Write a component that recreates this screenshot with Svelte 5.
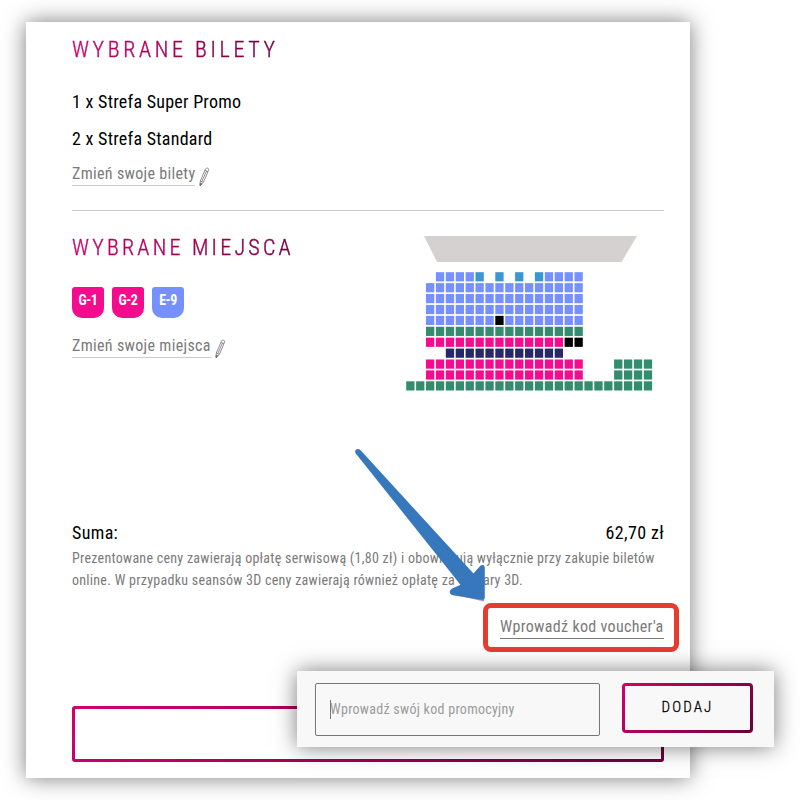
<script lang="ts">
	type Run = [row: number, from: number, to: number, kind: string];

	const tickets = [
		{ count: 1, name: 'Strefa Super Promo' },
		{ count: 2, name: 'Strefa Standard' }
	];

	const chosen = [
		{ label: 'G-1', kind: 'pink' },
		{ label: 'G-2', kind: 'pink' },
		{ label: 'E-9', kind: 'blue' }
	];

	// runs of neighbouring seats: row, first column, last column, zone
	const runs: Run[] = [
		[0, 3, 6, 'blue'],
		[0, 7, 7, 'sky'],
		[0, 9, 9, 'sky'],
		[0, 11, 11, 'sky'],
		[0, 13, 13, 'sky'],
		[0, 14, 17, 'blue'],
		[1, 2, 17, 'blue'],
		[2, 2, 17, 'blue'],
		[3, 2, 17, 'blue'],
		[4, 2, 8, 'blue'],
		[4, 9, 9, 'taken'],
		[4, 10, 17, 'blue'],
		[5, 2, 17, 'green'],
		[6, 2, 15, 'pink'],
		[6, 16, 17, 'taken'],
		[7, 4, 15, 'navy'],
		[8, 2, 17, 'pink'],
		[8, 21, 24, 'green'],
		[9, 2, 17, 'pink'],
		[9, 21, 24, 'green'],
		[10, 0, 24, 'green']
	];

	const seats = runs.flatMap(([row, from, to, kind]) =>
		Array.from({ length: to - from + 1 }, (_, i) => ({
			x: 0.2 + (from + i) * 9.9,
			y: 36.2 + row * 10.91,
			kind
		}))
	);

	let code = $state('');
</script>

{#snippet pencil()}
	<svg class="pencil" width="11" height="20" viewBox="0 0 11 20">
		<path d="M1 18.6 1.3 14 6.4 2.2Q7.3.5 8.8 1.2T9.5 3.4L4.4 15.3ZM1.3 14 4.4 15.3M5.9 3.3 9 4.7M2.8 14.5 7.5 4" />
		<path class="tip" d="m1 18.8.2-2.7 1.8.8Z" />
	</svg>
{/snippet}

<div class="page">
	<main class="card">
		<h2 class="title"><span>Wybrane bilety</span></h2>
		<ul class="tickets">
			{#each tickets as ticket}
				<li>{ticket.count} x {ticket.name}</li>
			{/each}
		</ul>
		<div class="edit"><a class="link" href="#bilety">Zmień swoje bilety</a>{@render pencil()}</div>

		<section class="seats">
			<div>
				<h2 class="title"><span class="tight">Wybrane miejsca</span></h2>
				<div class="badges">
					{#each chosen as seat}
						<span class="badge {seat.kind}">{seat.label}</span>
					{/each}
				</div>
				<div class="edit"><a class="link" href="#miejsca">Zmień swoje miejsca</a>{@render pencil()}</div>
			</div>
			<svg class="map" width="248" height="156" viewBox="0 0 248 156">
				<path class="screen" d="M18 0H231L215.5 26H31Z" />
				{#each seats as seat}
					<rect class={seat.kind} x={seat.x} y={seat.y} width="8.3" height="9.2" />
				{/each}
			</svg>
		</section>

		<div class="sum"><span>Suma:</span><span>62,70 zł</span></div>
		<p class="note">
			Prezentowane ceny zawierają opłatę serwisową (1,80 zł) i obowiązują wyłącznie przy zakupie biletów<br />
			online. W przypadku seansów 3D ceny zawierają również opłatę za okulary 3D.
		</p>
		<div class="voucher"><a class="link" href="#voucher">Wprowadź kod voucher'a</a></div>
		<div class="next frame"></div>
	</main>

	<svg class="arrow" width="140" height="160" viewBox="350 445 140 160">
		<path class="shade" d="M451 594 484 601.5 484.5 597 452 590Z" />
		<path d="M355.4 453C354.2 449.5 358 447.8 360.6 450.3L473.5 573.5 480.5 565.6Q484.6 563.5 484.8 568V597Q484.8 600.2 481.3 599.7L453 595.3C449 594.5 448.6 590.5 452.2 588.5L460.5 584.8Z" />
	</svg>

	<form class="promo">
		<div class="field">
			<input bind:value={code} placeholder="Wprowadź swój kod promocyjny" />
			<i class="caret"></i>
		</div>
		<button type="button" class="frame">Dodaj</button>
	</form>
</div>

<style>
	:global(body) {
		background: #fff;
	}

	.page {
		position: relative;
		box-sizing: border-box;
		width: 800px;
		height: 800px;
		padding: 22px 110px 22px 26px;
		overflow: hidden;
		font-family: 'Roboto Condensed', Roboto, sans-serif;
		font-stretch: 75%;
		color: #000;
	}

	.card {
		box-sizing: border-box;
		height: 756px;
		padding: 14px 26px 16px 46px;
		background: #fff;
		box-shadow: 0 0 21px rgba(0, 0, 0, 0.52);
		display: flex;
		flex-direction: column;
	}

	.title {
		height: 26px;
		margin: 0;
		font-size: 22px;
		font-weight: 300;
		line-height: 28px;
		text-transform: uppercase;
	}

	.title span {
		display: inline-block;
		white-space: nowrap;
		letter-spacing: 3.65px;
		background: linear-gradient(90deg, #d3006c, #74003f);
		background-clip: text;
		-webkit-background-clip: text;
		-webkit-text-stroke: 0.4px transparent;
		color: transparent;
	}

	.title .tight {
		letter-spacing: 3.25px;
	}

	.tickets {
		list-style: none;
		margin: 21px 0 5px;
		padding: 0;
	}

	.tickets li {
		height: 37px;
		font-size: 18px;
		line-height: 37px;
		letter-spacing: 0.25px;
	}

	.edit {
		display: flex;
		gap: 4px;
		height: 28px;
	}

	.link {
		box-sizing: border-box;
		height: 24px;
		border-bottom: 1px solid #ccc;
		font-size: 16px;
		line-height: 24px;
		letter-spacing: 0.32px;
		color: #7a7a7a;
		text-decoration: none;
		white-space: nowrap;
	}

	.pencil {
		margin-top: 5px;
		fill: none;
		stroke: #6c6c6c;
		stroke-width: 0.75;
	}

	.pencil .tip {
		fill: #6c6c6c;
	}

	.seats {
		display: flex;
		justify-content: space-between;
		height: 309px;
		margin-top: 20px;
		border-top: 1px solid #ccc;
	}

	.seats .title {
		margin-top: 23px;
	}

	.badges {
		display: flex;
		gap: 8px;
		margin: 27px 0 16px;
	}

	.badge {
		width: 32px;
		height: 31px;
		border-radius: 3px 3px 10px 10px;
		font-size: 14px;
		font-weight: 700;
		line-height: 27px;
		letter-spacing: -0.5px;
		text-align: center;
		color: #fff;
	}

	.badge.pink {
		background: #f50b8d;
	}

	.badge.blue {
		background: #7690ff;
	}

	.map {
		margin: 25px 10px 0 0;
	}

	.screen {
		fill: #d5d1d0;
	}

	rect.blue {
		fill: #7690ff;
	}

	rect.sky {
		fill: #3c96d0;
	}

	rect.green {
		fill: #348c6e;
	}

	rect.pink {
		fill: #f50b8d;
	}

	rect.navy {
		fill: #262967;
	}

	rect.taken {
		fill: #000;
	}

	.sum {
		display: flex;
		justify-content: space-between;
		height: 27px;
		font-size: 18px;
		line-height: 26px;
		letter-spacing: 0.35px;
	}

	.note {
		margin: 0;
		font-size: 14px;
		line-height: 22px;
		letter-spacing: 0.27px;
		color: #7a7a7a;
		white-space: nowrap;
	}

	.voucher {
		box-sizing: border-box;
		align-self: flex-end;
		width: 196px;
		height: 49px;
		margin: 12px -15px 0 0;
		padding: 3px 10px 0 12px;
		border: 5px solid #e63c2f;
		border-radius: 8px;
	}

	.voucher .link {
		display: inline-block;
		height: 28px;
		line-height: 31px;
		border-color: #767676;
	}

	.frame {
		box-sizing: border-box;
		border: 3px solid transparent;
		border-radius: 4px;
		background: linear-gradient(#fff, #fff) padding-box, linear-gradient(135deg, #d3006c, #6a003a) border-box;
	}

	.next {
		height: 56px;
		margin-top: auto;
		border-radius: 3px;
	}

	.arrow {
		position: absolute;
		left: 350px;
		top: 445px;
		fill: #3778bd;
	}

	.arrow .shade {
		fill: #9b9fc0;
	}

	.promo {
		position: absolute;
		left: 297px;
		top: 671px;
		box-sizing: border-box;
		display: flex;
		gap: 22px;
		width: 477px;
		height: 76px;
		padding: 12px 18px;
		background: #f8f8f8;
		box-shadow: 0 0 21px rgba(0, 0, 0, 0.52);
	}

	.field {
		position: relative;
		width: 285px;
		height: 53px;
	}

	.field input {
		box-sizing: border-box;
		width: 100%;
		height: 100%;
		padding: 0 14px 2px;
		border: 1px solid #767676;
		border-radius: 2px;
		background: transparent;
		font: inherit;
		font-size: 14px;
		letter-spacing: 0.28px;
		outline: none;
	}

	.field input::placeholder {
		color: #9b9b9b;
		opacity: 1;
	}

	.caret {
		position: absolute;
		left: 15px;
		top: 17px;
		width: 1px;
		height: 19px;
		background: #777;
	}

	.promo button {
		width: 131px;
		height: 50px;
		padding: 0 0 3px;
		background: linear-gradient(#f8f8f8, #f8f8f8) padding-box, linear-gradient(135deg, #d3006c, #6a003a) border-box;
		font: inherit;
		font-size: 15px;
		font-weight: 300;
		letter-spacing: 2.1px;
		text-transform: uppercase;
		-webkit-text-stroke: 0.3px #000;
		color: #000;
	}
</style>
